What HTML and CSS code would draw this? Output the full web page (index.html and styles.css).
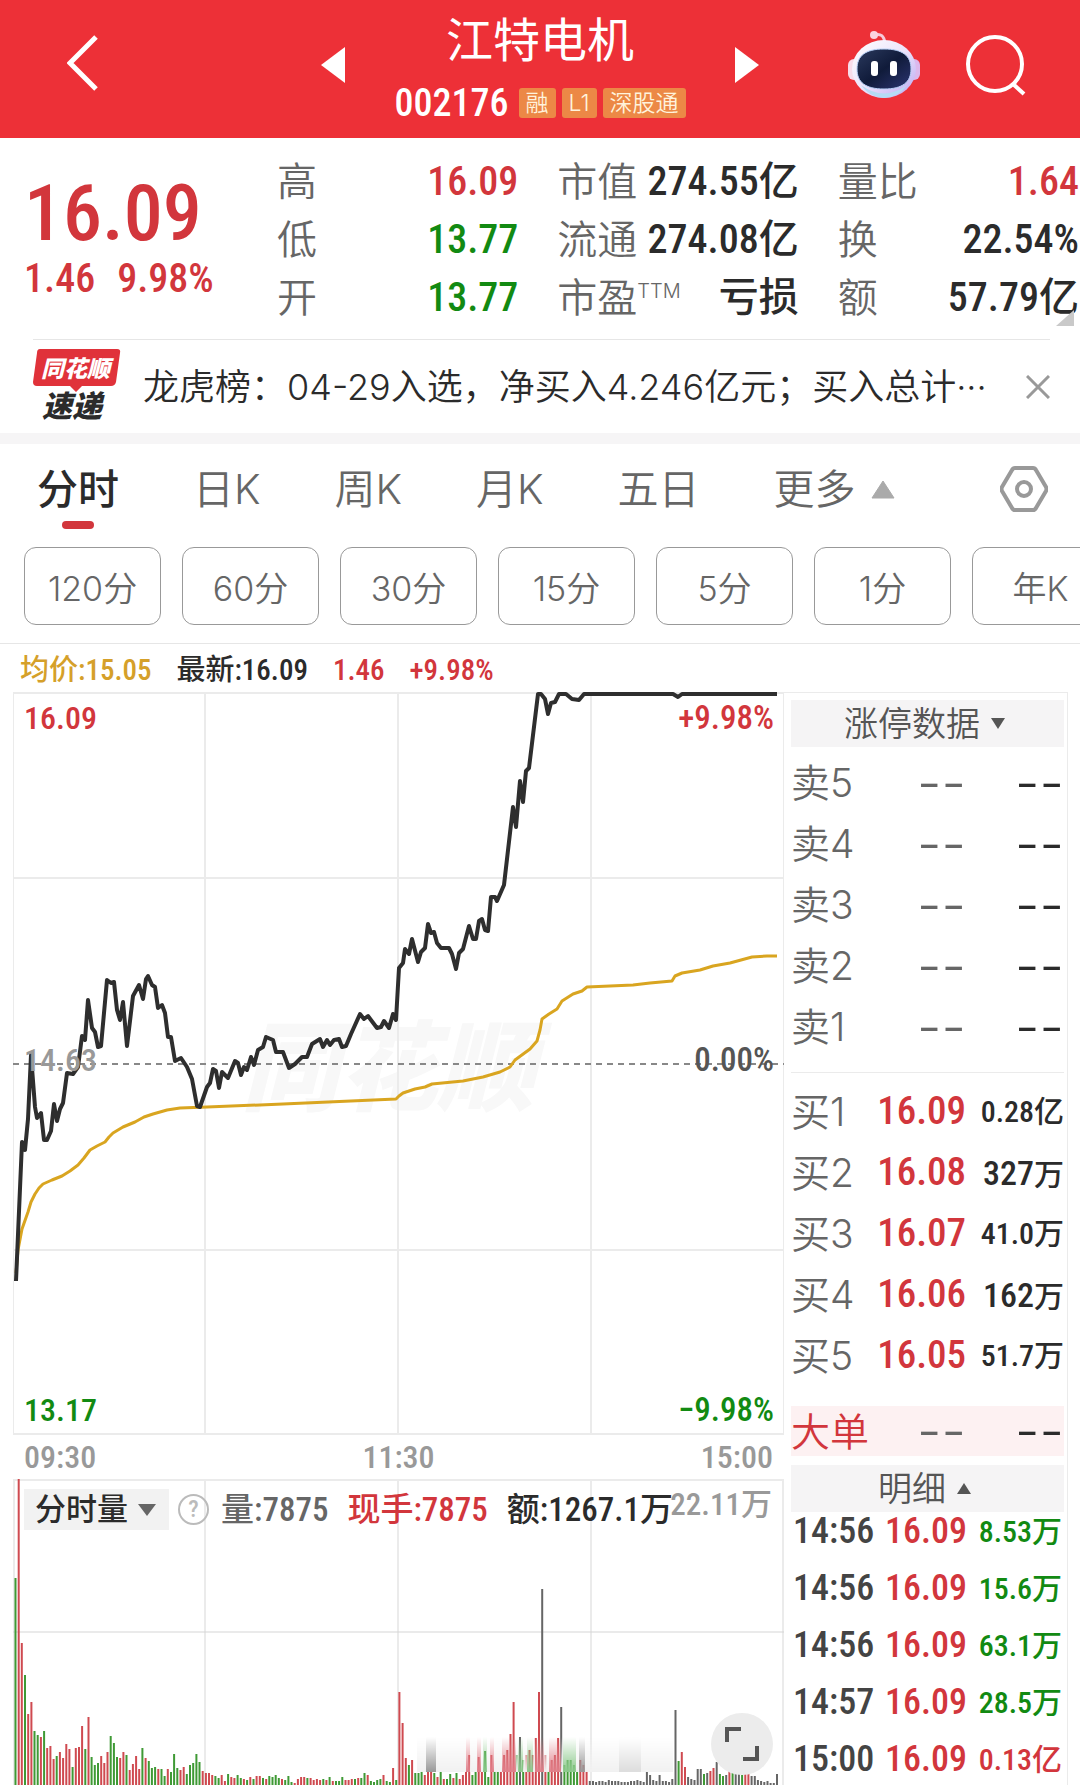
FILE: index.html
```html
<!DOCTYPE html>
<html lang="zh-CN">
<head>
<meta charset="utf-8">
<meta name="viewport" content="width=device-width, initial-scale=1">
<title>江特电机 002176</title>
<link rel="stylesheet" href="styles.css">
</head>
<body>
<header class="topbar">
  <div class="topbar-left">
    <button class="icon-btn" aria-label="返回"><svg width="32" height="56" viewBox="0 0 32 56"><path d="M29 2 3 28l26 26" fill="none" stroke="#fff" stroke-width="5"/></svg></button>
  </div>
  <div class="stock-switch">
    <button class="icon-btn" aria-label="上一只"><svg width="24" height="36" viewBox="0 0 24 36"><path d="M24 0v36L0 18z" fill="#fff"/></svg></button>
    <div class="stock-id">
      <h1 class="stock-name">江特电机</h1>
      <div class="stock-code num">002176<span class="badge">融</span><span class="badge">L1</span><span class="badge">深股通</span></div>
    </div>
    <button class="icon-btn" aria-label="下一只"><svg width="24" height="36" viewBox="0 0 24 36"><path d="M0 0v36l24-18z" fill="#fff"/></svg></button>
  </div>
  <div class="topbar-right">
    <button class="icon-btn" aria-label="智能助手">
      <svg width="72" height="70" viewBox="0 0 72 70">
        <defs>
          <linearGradient id="shell" x1="0" y1="0" x2="1" y2="1"><stop offset="0" stop-color="#fff"/><stop offset=".5" stop-color="#ece4fb"/><stop offset="1" stop-color="#b9a6f2"/></linearGradient>
          <linearGradient id="visor" x1="0" y1="0" x2="1" y2="1"><stop offset="0" stop-color="#2b3a5e"/><stop offset=".5" stop-color="#101b3a"/><stop offset="1" stop-color="#2c3573"/></linearGradient>
        </defs>
        <path d="M26 5c7-2 10 1 11 8" fill="none" stroke="#f6c9da" stroke-width="3"/>
        <circle cx="26" cy="5" r="4" fill="#fbd3df"/>
        <rect x="0" y="29" width="12" height="21" rx="6" fill="#f8dcea"/>
        <rect x="60" y="29" width="12" height="21" rx="6" fill="#dcb8ec"/>
        <ellipse cx="36" cy="39" rx="32" ry="29" fill="url(#shell)"/>
        <path d="M13 55q23 17 46 0-8 12-23 13-15-1-23-13z" fill="#b5dcf4"/>
        <path d="M36 19c19 0 27 7 27 20s-8 20-27 20S9 52 9 39s8-20 27-20z" fill="url(#visor)" stroke="#b7d0f7" stroke-width="1"/>
        <rect x="23" y="31" width="7" height="15" rx="3" fill="#fff"/>
        <rect x="42" y="31" width="7" height="15" rx="3" fill="#fff"/>
      </svg>
    </button>
    <button class="icon-btn" aria-label="搜索"><svg width="60" height="62" viewBox="0 0 60 62"><circle cx="29" cy="30" r="27" fill="none" stroke="#fff" stroke-width="4"/><path d="m47 50 11 10" stroke="#fff" stroke-width="4"/></svg></button>
  </div>
</header>

<section class="quote">
  <div class="quote-main num up">
    <div class="last-price">16.09</div>
    <div class="change"><span>1.46</span><span>9.98%</span></div>
  </div>
  <dl class="facts">
    <div><dt>高</dt><dd class="up">16.09</dd></div>
    <div><dt>低</dt><dd class="down">13.77</dd></div>
    <div><dt>开</dt><dd class="down">13.77</dd></div>
  </dl>
  <dl class="facts">
    <div><dt>市值</dt><dd>274.55亿</dd></div>
    <div><dt>流通</dt><dd>274.08亿</dd></div>
    <div><dt>市盈<sup>TTM</sup></dt><dd>亏损</dd></div>
  </dl>
  <dl class="facts">
    <div><dt>量比</dt><dd class="up">1.64</dd></div>
    <div><dt>换</dt><dd>22.54%</dd></div>
    <div><dt>额</dt><dd>57.79亿</dd></div>
  </dl>
  <svg class="corner" width="18" height="16" viewBox="0 0 18 16"><path d="M18 0v16H0z" fill="#c9c9c9"/></svg>
</section>

<section class="news">
  <svg class="news-logo" width="88" height="76" viewBox="0 0 88 76">
    <path d="M7 0h77q4 0 3 4l-4 29q-1 4-5 4H49l-6 6-6-6H4q-4 0-4-4L4 4q0-4 3-4z" fill="#e0323a"/>
    <text x="8" y="28" class="logo-top">同花顺</text>
    <text x="9" y="68" class="logo-bottom">速递</text>
  </svg>
  <a class="news-text" href="#news">龙虎榜：04-29入选，净买入4.246亿元；买入总计<span class="dots">···</span></a>
  <button class="icon-btn" aria-label="关闭"><svg width="24" height="24" viewBox="0 0 24 24"><path d="M1 1l22 22M23 1 1 23" stroke="#999" stroke-width="3"/></svg></button>
</section>

<nav class="tabs">
  <button class="tab tab-on">分时</button>
  <button class="tab">日K</button>
  <button class="tab">周K</button>
  <button class="tab">月K</button>
  <button class="tab">五日</button>
  <button class="tab tab-more">更多<svg width="24" height="19" viewBox="0 0 24 19"><path d="M12 1 23 18H1z" fill="#aaa" stroke="#aaa" stroke-linejoin="round"/></svg></button>
  <button class="icon-btn settings" aria-label="设置"><svg width="48" height="46" viewBox="0 0 48 46"><path d="M15 2h18q2 0 3 2l10 17q1 2 0 4L36 42q-1 2-3 2H15q-2 0-3-2L2 25q-1-2 0-4L12 4q1-2 3-2z" fill="none" stroke="#999" stroke-width="4"/><circle cx="24" cy="23" r="7" fill="none" stroke="#999" stroke-width="4"/></svg></button>
</nav>

<div class="periods">
  <button class="period">120分</button>
  <button class="period">60分</button>
  <button class="period">30分</button>
  <button class="period">15分</button>
  <button class="period">5分</button>
  <button class="period">1分</button>
  <button class="period">年K</button>
</div>

<p class="chart-info num"><span class="avg">均价:15.05</span><span>最新:16.09</span><span class="up">1.46</span><span class="up">+9.98%</span></p>

<main class="market">
  <div class="charts">
    <div class="price-chart">
      <span class="watermark">同花顺</span>
      <svg class="plot" viewBox="13 692 771 743" preserveAspectRatio="none">
        <path class="grid" d="M13 693H784V1434H13zM13 878H784M13 1250H784M205 693V1434M398 693V1434M591 693V1434"/>
        <path class="zero" d="M13 1064H784"/>
        <polyline class="avg-line" points="16,1273 18,1250 22,1229 28,1212 31,1202 35,1194 39,1188 43,1184 52,1180 62,1176 70,1171 78,1165 84,1158 90,1150 97,1146 105,1142 109,1137 113,1133 123,1127 135,1122 144,1117 153,1114 167,1110 180,1108 207,1107 283,1104 396,1099 399,1096 403,1093 415,1089 425,1087 432,1084 463,1081 483,1077 500,1072 510,1067 515,1060 530,1049 537,1041 540,1030 542,1019 549,1014 557,1009 562,1001 573,994 582,991 587,987 633,985 650,983 672,981 675,976 682,973 700,970 713,966 730,963 752,957 767,956 777,956"/>
        <polyline class="price-line" points="16,1281 22,1142 25,1150 28,1119 31,1055 35,1107 37,1118 41,1113 44,1140 47,1140 51,1131 54,1104 57,1121 60,1109 63,1103 67,1073 73,1074 78,1067 82,1036 85,1040 88,1000 92,1028 95,1032 98,1047 101,1046 107,980 111,983 114,982 117,1010 120,1020 123,1002 127,1046 133,996 139,985 143,999 146,979 148,976 152,985 155,987 158,1008 162,1005 165,1013 168,1037 171,1037 175,1061 181,1058 187,1067 192,1079 197,1106 200,1107 207,1087 210,1083 213,1069 216,1071 219,1088 222,1072 228,1078 235,1061 238,1063 241,1075 244,1067 247,1070 251,1057 254,1065 258,1050 263,1047 266,1037 273,1040 276,1052 283,1052 289,1068 295,1064 302,1057 307,1057 312,1044 320,1039 323,1047 327,1040 330,1045 334,1040 339,1039 342,1047 346,1046 351,1034 360,1014 364,1019 368,1016 377,1028 381,1027 384,1021 389,1028 393,1014 396,1020 399,968 403,963 405,949 409,954 412,939 418,962 421,952 425,948 428,924 431,933 434,932 437,943 441,948 449,948 452,954 456,969 459,953 463,949 469,926 473,939 476,939 479,921 482,919 485,930 488,931 491,897 495,897 497,901 504,885 513,807 516,827 520,781 523,802 526,771 529,768 538,694 541,694 545,699 548,714 551,703 555,702 559,694 566,694 572,699 579,700 584,694 673,694 678,697 682,694 777,694"/>
      </svg>
      <span class="axis axis-tl num up">16.09</span>
      <span class="axis axis-tr num up">+9.98%</span>
      <span class="axis axis-ml num">14.63</span>
      <span class="axis axis-mr num">0.00%</span>
      <span class="axis axis-bl num down">13.17</span>
      <span class="axis axis-br num down">−9.98%</span>
    </div>
    <div class="times num"><span>09:30</span><span>11:30</span><span>15:00</span></div>
    <div class="volume-chart">
      <svg class="plot" viewBox="0 0 771 306" preserveAspectRatio="none">
        <defs>
          <linearGradient id="fade" x1="0" y1="0" x2="0" y2="1"><stop offset="0" stop-color="#fff" stop-opacity="0"/><stop offset="1" stop-color="#fff"/></linearGradient>
          <mask id="haze"><rect x="400" y="258" width="260" height="35" fill="url(#fade)"/></mask>
        </defs>
        <path class="grid" d="M0 1H771M1 0V306M192 0V306M385 0V306M578 0V306M770 0V306"/>
        <path class="mid" d="M0 153H771"/>
        <g id="volume-bars"></g>
        <g mask="url(#haze)">
          <rect x="404" y="258" width="256" height="35" fill="#f1f1f1"/>
          <path d="M413 258h10v35h-10zM566 258h6v35h-6z" fill="#999"/>
          <path d="M453 258h4v35h-4zM464 258h4v35h-4zM477 258h4v35h-4zM489 258h14v35h-14zM522 258h9v35h-9zM536 258h12v35h-12z" fill="#e0808a"/>
          <path d="M470 258h4v35h-4zM505 258h5v35h-5zM514 258h6v35h-6zM550 258h13v35h-13z" fill="#8cc98c"/>
          <path d="M606 258h22v35h-22z" fill="#ddd"/>
        </g>
      </svg>
      <div class="volume-info num">
        <button class="indicator">分时量<svg width="18" height="12" viewBox="0 0 18 12"><path d="M0 0h18L9 12z" fill="#666"/></svg></button>
        <button class="help" aria-label="说明">?</button>
        <span class="muted">量:7875</span><span class="up">现手:7875</span><span>额:1267.1万</span>
      </div>
      <span class="volume-max num">22.11万</span>
      <button class="expand" aria-label="全屏"><svg width="34" height="34" viewBox="0 0 34 34"><path d="M2 15V2h14M32 19v13H18" fill="none" stroke="#555" stroke-width="4"/></svg></button>
    </div>
  </div>

  <aside class="book">
    <button class="book-head">涨停数据<svg width="14" height="11" viewBox="0 0 14 11"><path d="M0 0h14L7 11z" fill="#555"/></svg></button>
    <table class="depth">
      <tr><th>卖5</th><td class="dash muted">--</td><td class="dash">--</td></tr>
      <tr><th>卖4</th><td class="dash muted">--</td><td class="dash">--</td></tr>
      <tr><th>卖3</th><td class="dash muted">--</td><td class="dash">--</td></tr>
      <tr><th>卖2</th><td class="dash muted">--</td><td class="dash">--</td></tr>
      <tr><th>卖1</th><td class="dash muted">--</td><td class="dash">--</td></tr>
    </table>
    <table class="depth depth-buy">
      <tr><th>买1</th><td class="price up">16.09</td><td class="size">0.28亿</td></tr>
      <tr><th>买2</th><td class="price up">16.08</td><td class="size size-short">327<span>万</span></td></tr>
      <tr><th>买3</th><td class="price up">16.07</td><td class="size">41.0万</td></tr>
      <tr><th>买4</th><td class="price up">16.06</td><td class="size size-short">162<span>万</span></td></tr>
      <tr><th>买5</th><td class="price up">16.05</td><td class="size">51.7万</td></tr>
    </table>
    <table class="depth depth-large">
      <tr><th>大单</th><td class="dash muted">--</td><td class="dash">--</td></tr>
    </table>
    <button class="book-head">明细<svg width="14" height="11" viewBox="0 0 14 11"><path d="M7 0l7 11H0z" fill="#555"/></svg></button>
    <table class="ticks num">
      <tr><td>14:56</td><td class="up">16.09</td><td class="size down">8.53万</td></tr>
      <tr><td>14:56</td><td class="up">16.09</td><td class="size down">15.6万</td></tr>
      <tr><td>14:56</td><td class="up">16.09</td><td class="size down">63.1万</td></tr>
      <tr><td>14:57</td><td class="up">16.09</td><td class="size down">28.5万</td></tr>
      <tr><td>15:00</td><td class="up">16.09</td><td class="size up">0.13亿</td></tr>
    </table>
  </aside>
</main>
<script src="volume.js"></script>
</body>
</html>
```
FILE: styles.css
```css
* { box-sizing: border-box; }

body {
  margin: 0;
  background: #fff;
  color: #2b2b2b;
  font-family: Inter, "Noto Sans CJK SC", sans-serif;
  font-weight: 350;
  overflow-x: hidden;
}

button {
  margin: 0;
  padding: 0;
  border: 0;
  background: none;
  color: inherit;
  font: inherit;
}

svg { display: block; }
table { border-collapse: collapse; }
h1, p, dl, dd { margin: 0; }

.num { font-family: "Roboto Condensed", "Noto Sans CJK SC", sans-serif; font-weight: 500; }
.up { color: #d2363c; }
.down { color: #128a12; }
.muted { color: #666; }
.icon-btn { flex: none; }

/* Top bar */
.topbar {
  display: grid;
  grid-template-columns: 1fr 438px 1fr;
  align-items: center;
  height: 138px;
  padding-bottom: 8px;
  background: #ed3037;
  color: #fff;
}
.topbar-left { padding-left: 67px; }
.topbar-right {
  display: flex;
  justify-content: flex-end;
  align-items: center;
  gap: 46px;
  padding-right: 54px;
}
.stock-switch { display: flex; justify-content: space-between; align-items: center; }
.stock-id { display: flex; flex-direction: column; align-items: center; gap: 20px; }
.stock-name { font-size: 47px; line-height: 56px; font-weight: 400; }
.stock-code { display: flex; align-items: center; gap: 6px; font-size: 38px; line-height: 30px; }
.badge {
  padding: 0 7px;
  border-radius: 3px;
  background: #ec8846;
  color: #fff3dc;
  font-family: Inter, "Noto Sans CJK SC", sans-serif;
  font-size: 23px;
  line-height: 30px;
  font-weight: 350;
}
.badge:first-of-type { margin-left: 4px; }

/* Quote */
.quote {
  position: relative;
  display: grid;
  grid-template-columns: 214px repeat(3, 1fr);
  gap: 39px;
  height: 201px;
  padding: 15px 1px 0 24px;
}
.quote-main { padding-top: 21px; }
.last-price { font-size: 78px; line-height: 80px; }
.change { display: flex; gap: 22px; font-size: 40px; line-height: 50px; }
.facts { white-space: nowrap; }
.facts div { display: flex; justify-content: space-between; line-height: 58px; font-size: 40px; }
.facts dt { color: #666; }
.facts dd { font-family: "Roboto Condensed", "Noto Sans CJK SC", sans-serif; font-weight: 500; }
.facts sup { font-size: 20px; line-height: 20px; }
.corner { position: absolute; right: 6px; bottom: 13px; }

/* News strip */
.news {
  display: flex;
  align-items: center;
  height: 94px;
  margin: 0 30px 0 33px;
  border-top: 1px solid #e6e6e6;
}
.news-logo { flex: none; margin-right: 22px; overflow: visible; }
.logo-top, .logo-bottom { font-family: "Noto Sans CJK SC", sans-serif; font-style: italic; font-weight: 900; }
.logo-top { font-size: 23px; fill: #fff; }
.logo-bottom { font-size: 30px; fill: #2b2b2b; }
.news-text {
  flex: 1;
  overflow: hidden;
  color: #2b2b2b;
  font-size: 36px;
  line-height: 48px;
  text-decoration: none;
  white-space: nowrap;
}

/* Chart tabs */
.tabs {
  display: flex;
  align-items: center;
  height: 113px;
  padding: 0 32px 12px 37px;
  border-top: 11px solid #f6f5f6;
  color: #666;
  font-size: 41px;
  line-height: 56px;
  gap: 74px;
}
.tab { position: relative; white-space: nowrap; }
.tab-on { color: #2b2b2b; font-weight: 500; }
.tab-on::after {
  content: "";
  position: absolute;
  left: 50%;
  bottom: -12px;
  width: 32px;
  height: 8px;
  margin-left: -16px;
  border-radius: 4px;
  background: #d2363c;
}
.tab-more { display: flex; align-items: center; gap: 15px; }
.settings { margin-left: auto; }

.periods {
  display: flex;
  gap: 21px;
  height: 98px;
  padding: 1px 0 18px 24px;
  overflow: hidden;
  border-bottom: 1px solid #e6e6e6;
}
.period {
  flex: none;
  width: 137px;
  height: 78px;
  border: 1px solid #999;
  border-radius: 12px;
  color: #666;
  font-size: 34px;
}

.chart-info { display: flex; gap: 25px; padding: 4px 0 0 20px; font-size: 29px; line-height: 44px; }
.avg { color: #d5a02a; }

/* Charts */
.market { display: grid; grid-template-columns: 1fr 284px; padding: 0 12px 0 13px; }
.price-chart { position: relative; height: 743px; }
.plot { position: relative; width: 100%; height: 100%; }
.grid { fill: none; stroke: #ebebeb; stroke-width: 2; }
.mid { fill: none; stroke: #d5d5d5; stroke-width: 1; }
.zero { stroke: #888; stroke-width: 2; stroke-dasharray: 6 5; }
.avg-line, .price-line { fill: none; stroke-width: 3; stroke-linejoin: round; }
.avg-line { stroke: #d9a520; }
.price-line { stroke: #2e2e2e; stroke-width: 4; }
.watermark {
  position: absolute;
  left: 228px;
  top: 326px;
  color: #f8f8f8;
  font-size: 98px;
  line-height: 100px;
  font-style: italic;
  font-weight: 900;
}
.axis { position: absolute; font-size: 32px; line-height: 32px; }
.axis-tl, .axis-ml, .axis-bl { left: 11px; }
.axis-tr, .axis-mr, .axis-br { right: 10px; font-size: 33px; }
.axis-tl, .axis-tr { top: 10px; }
.axis-ml, .axis-mr { top: 352px; }
.axis-bl, .axis-br { bottom: 9px; }
.axis-ml { color: #999; }
.axis-mr { color: #555; }
.times {
  display: flex;
  justify-content: space-between;
  padding: 0 11px;
  color: #999;
  font-size: 32px;
  line-height: 44px;
}

.volume-chart { position: relative; height: 306px; }
.bar-up { stroke: #cf4a50; }
.bar-down { stroke: #3f9a35; }
.bar-flat { stroke: #666; }
.volume-info {
  position: absolute;
  left: 11px;
  top: 10px;
  display: flex;
  align-items: center;
  gap: 19px;
  font-size: 33px;
  line-height: 41px;
  white-space: nowrap;
}
.indicator { display: flex; align-items: center; gap: 10px; padding: 0 13px 0 11px; background: #f2f2f2; font-size: 31px; }
.help {
  width: 31px;
  height: 31px;
  margin: 0 -7px 0 -10px;
  border: 2px solid #bbb;
  border-radius: 50%;
  color: #bbb;
  font-size: 24px;
  line-height: 27px;
}
.volume-max { position: absolute; right: 12px; top: 6px; color: #999; font-size: 31px; line-height: 40px; }
.expand {
  position: absolute;
  right: 11px;
  bottom: 10px;
  display: grid;
  place-items: center;
  width: 62px;
  height: 62px;
  border-radius: 50%;
  background: #ececec;
}

/* Order book */
.book { padding: 7px 3px 0 7px; border: 1px solid #ebebeb; border-width: 1px 1px 0 0; }
.book-head {
  display: flex;
  justify-content: center;
  align-items: center;
  gap: 11px;
  width: 100%;
  height: 47px;
  padding-right: 6px;
  background: #f5f4f5;
  color: #555;
  font-size: 34px;
  line-height: 47px;
}
.depth, .ticks { width: 100%; table-layout: fixed; line-height: 1; }
.depth { margin-top: 5px; }
.depth th, .depth td, .ticks td { padding: 0; text-align: right; white-space: nowrap; }
.depth tr { height: 61px; }
.depth th { width: 80px; color: #666; font-size: 39px; font-weight: 350; text-align: left; }
.depth td:last-child { width: 98px; }
.dash { font-size: 54px; line-height: 38px; }
.price, .size { font-family: "Roboto Condensed", "Noto Sans CJK SC", sans-serif; font-weight: 500; }
.price { font-size: 39px; }
.size { font-size: 30px; }
.size-short { font-size: 34px; }
.size-short span { font-size: 30px; }
.depth-buy { margin-top: 24px; box-shadow: 0 -8px 0 #fff, 0 -9px 0 #ebebeb; }
.depth-large { margin: 20px 0 9px; background: #fdf1f2; }
.depth-large tr { height: 50px; }
.depth-large th { color: #d2363c; }
.ticks { margin-top: 2px; }
.ticks td { height: 57px; padding-bottom: 22px; font-size: 36px; line-height: 35px; color: #444; }
.ticks tr:last-child td { height: 35px; padding-bottom: 0; }
.ticks td:first-child { width: 84px; padding-left: 2px; text-align: left; }
.ticks td:last-child { width: 97px; padding-right: 2px; font-size: 30px; }
.ticks .up { color: #d2363c; }
.ticks .down { color: #128a12; }
```
FILE: volume.js
```js
// One entry per minute: height, then u (up), d (down) or f (flat).
const volumes = `207d 307u 142u 110d 71u 83u 54d 50d 48u 54d 37u 39u 26u 29d 33u 27u 41u 36u 18d 37u
38u 59u 36d 68u 28d 20d 22d 29u 22u 33u 49d 42d 28d 27u 33u 30d 15u 21u 29u 16u
37d 27u 24d 17d 18d 16u 16d 9d 16u 13d 31d 17d 15u 18u 11d 20d 22d 31d 23d 14u
12u 12u 10u 9d 7d 10u 4u 11d 8u 7u 10d 7d 6u 5d 8u 6d 9u 9u 7d 6u
9d 8d 10d 7d 6u 5d 9d 3d 2u 6u 8u 8u 7d 7u 5u 6u 5u 6d 5u 8d
4u 4d 4d 8d 5u 5u 6u 6d 7u 7d 12d 10u 4d 3d 5d 6d 10u 4d 3d 17u
5d 93u 62u 27u 20d 25u 12d 12d 14d 10u 13u 14u 12d 8u 13d 6u 6d 11d 7u 12d
6u 10u 14u 30u 10d 13d 28u 13u 34d 8d 30u 14d 14d 14u 30u 35u 51u 83u 30d 48f
25d 30u 35u 30u 47u 93u 196f 30u 14d 25u 30u 47u 78f 20d 25d 25d 20d 15d 25u 20u
13u 4f 4f 3f 4f 4f 3f 5f 4f 4f 4f 3f 3f 3f 4f 4f 5f 4f 3f 13f
10f 5f 4f 10f 4f 4f 3f 6f 75f 24d 33u 18u 8f 6f 5f 16f 16f 11d 12f 14u
17u 23f 11d 9d 10f 16u 12d 11f 11f 10d 26u 22u 9f 9f 5f 4f 3f 4f 2f 2f
11f`.split(/\s+/);

const classes = { u: "bar-up", d: "bar-down", f: "bar-flat" };
const paths = { u: "", d: "", f: "" };
const step = 771 / 243;

volumes.forEach((entry, minute) => {
  const height = parseInt(entry, 10);
  const x = (2.5 + minute * step).toFixed(1);
  paths[entry.slice(-1)] += `M${x} 306V${306 - height}`;
});

const group = document.getElementById("volume-bars");
for (const kind in paths) {
  const path = document.createElementNS("http://www.w3.org/2000/svg", "path");
  path.setAttribute("class", classes[kind]);
  path.setAttribute("stroke-width", "2");
  path.setAttribute("d", paths[kind]);
  group.appendChild(path);
}
```
